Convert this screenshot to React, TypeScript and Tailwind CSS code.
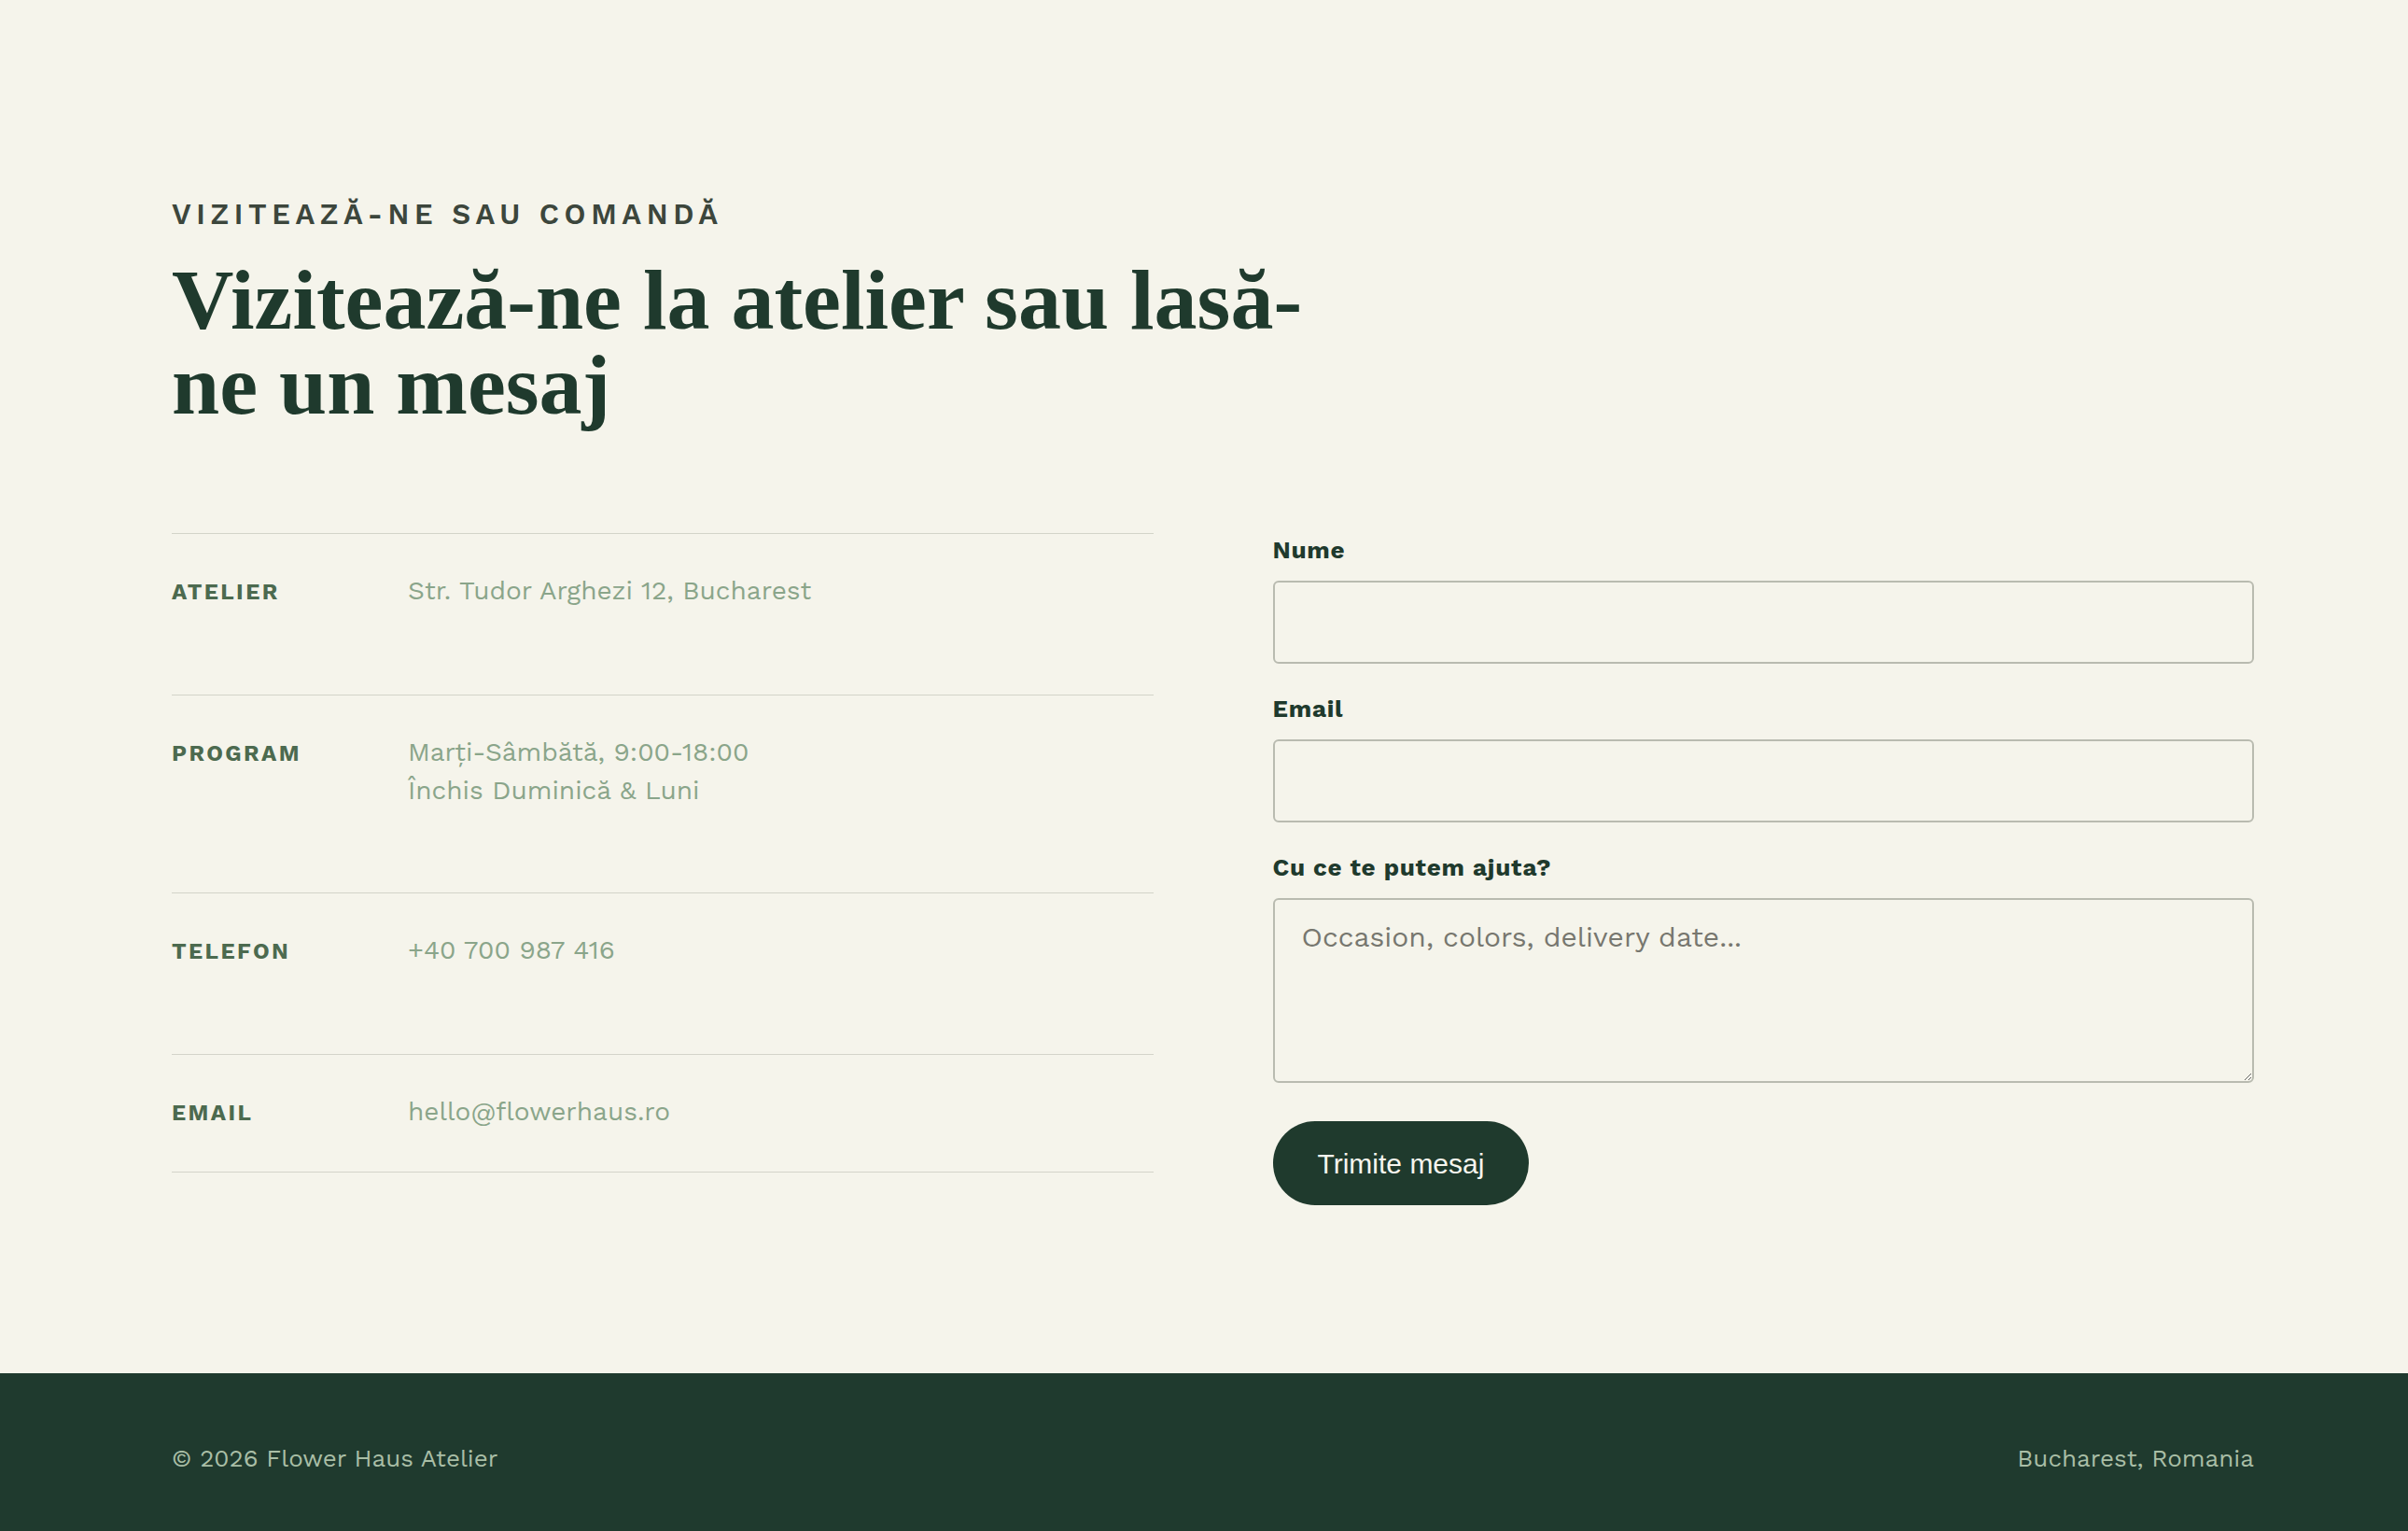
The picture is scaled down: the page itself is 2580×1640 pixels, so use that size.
import React from "react";

const sans = { fontFamily: '"Work Sans", Inter, "Noto Sans", sans-serif' };

type Row = { label: string; lines: string[] };

const rows: Row[] = [
  { label: "ATELIER", lines: ["Str. Tudor Arghezi 12, Bucharest"] },
  { label: "PROGRAM", lines: ["Marți-Sâmbătă, 9:00-18:00", "Închis Duminică & Luni"] },
  { label: "TELEFON", lines: ["+40 700 987 416"] },
  { label: "EMAIL", lines: ["hello@flowerhaus.ro"] },
];

function InfoList() {
  return (
    <dl className="flex flex-col border-b border-[#d3d4c9]">
      {rows.map((r) => (
        <div
          key={r.label}
          className="grid grid-cols-[253px_1fr] items-baseline border-t border-[#d3d4c9] pt-[40px] pb-[89px] last:pb-[42px]"
        >
          <dt className="text-[24px] leading-[41px] font-bold tracking-[0.1em] text-[#4c6a4f]">
            {r.label}
          </dt>
          <dd className="text-[28px] leading-[41px] text-[#8aa58a]">
            {r.lines.map((l) => (
              <div key={l}>{l}</div>
            ))}
          </dd>
        </div>
      ))}
    </dl>
  );
}

function Field({ label, children }: { label: string; children: React.ReactNode }) {
  return (
    <label className="flex flex-col mb-[30px]">
      <span className="text-[26px] leading-[36px] font-bold tracking-[0.03em] text-[#1f3a2d] mb-[15px]">
        {label}
      </span>
      {children}
    </label>
  );
}

function ContactForm() {
  const box =
    "w-full rounded-[6px] border-2 border-[#b9bbb0] bg-transparent outline-none text-[30px] text-[#1f3a2d] placeholder:text-[#77776f]";
  return (
    <form className="flex flex-col" onSubmit={(e) => e.preventDefault()}>
      <Field label="Nume">
        <input type="text" className={`${box} h-[89px] px-[28px]`} style={sans} />
      </Field>
      <Field label="Email">
        <input type="email" className={`${box} h-[89px] px-[28px]`} style={sans} />
      </Field>
      <Field label="Cu ce te putem ajuta?">
        <textarea
          className={`${box} h-[198px] px-[29px] py-[18px] leading-[44px]`}
          style={sans}
          placeholder="Occasion, colors, delivery date..."
        />
      </Field>
      <div className="mt-[11px]">
        <button
          type="submit"
          className="h-[90px] rounded-full bg-[#1f3a2d] px-[48px] text-[30px] text-[#f6f5ee]"
          style={{ fontFamily: '"Liberation Sans", Arial, sans-serif' }}
        >
          Trimite mesaj
        </button>
      </div>
    </form>
  );
}

export default function App() {
  return (
    <div className="min-h-screen bg-[#f5f4eb]" style={sans}>
      <main className="pl-[184px] pr-[165px] pt-[212px] pb-[180px]">
        <p className="text-[31px] leading-[36px] font-semibold tracking-[0.18em] text-[#3c463c]">
          VIZITEAZĂ-NE SAU COMANDĂ
        </p>
        <h1
          className="mt-[28px] max-w-[1250px] text-[92px] leading-[91px] font-bold text-[#1f3a2d]"
          style={{ fontFamily: '"Liberation Serif", "Times New Roman", serif' }}
        >
          Vizitează-ne la atelier sau lasă-ne un mesaj
        </h1>
        <section className="mt-[113px] grid grid-cols-2 gap-[128px] items-start">
          <InfoList />
          <ContactForm />
        </section>
      </main>
      <footer className="bg-[#1f3a2e] pl-[184px] pr-[165px] pt-[73px] pb-[60px]">
        <div className="flex items-center justify-between text-[26px] leading-[36px] text-[#a9bea6]">
          <span>© 2026 Flower Haus Atelier</span>
          <span>Bucharest, Romania</span>
        </div>
      </footer>
    </div>
  );
}
